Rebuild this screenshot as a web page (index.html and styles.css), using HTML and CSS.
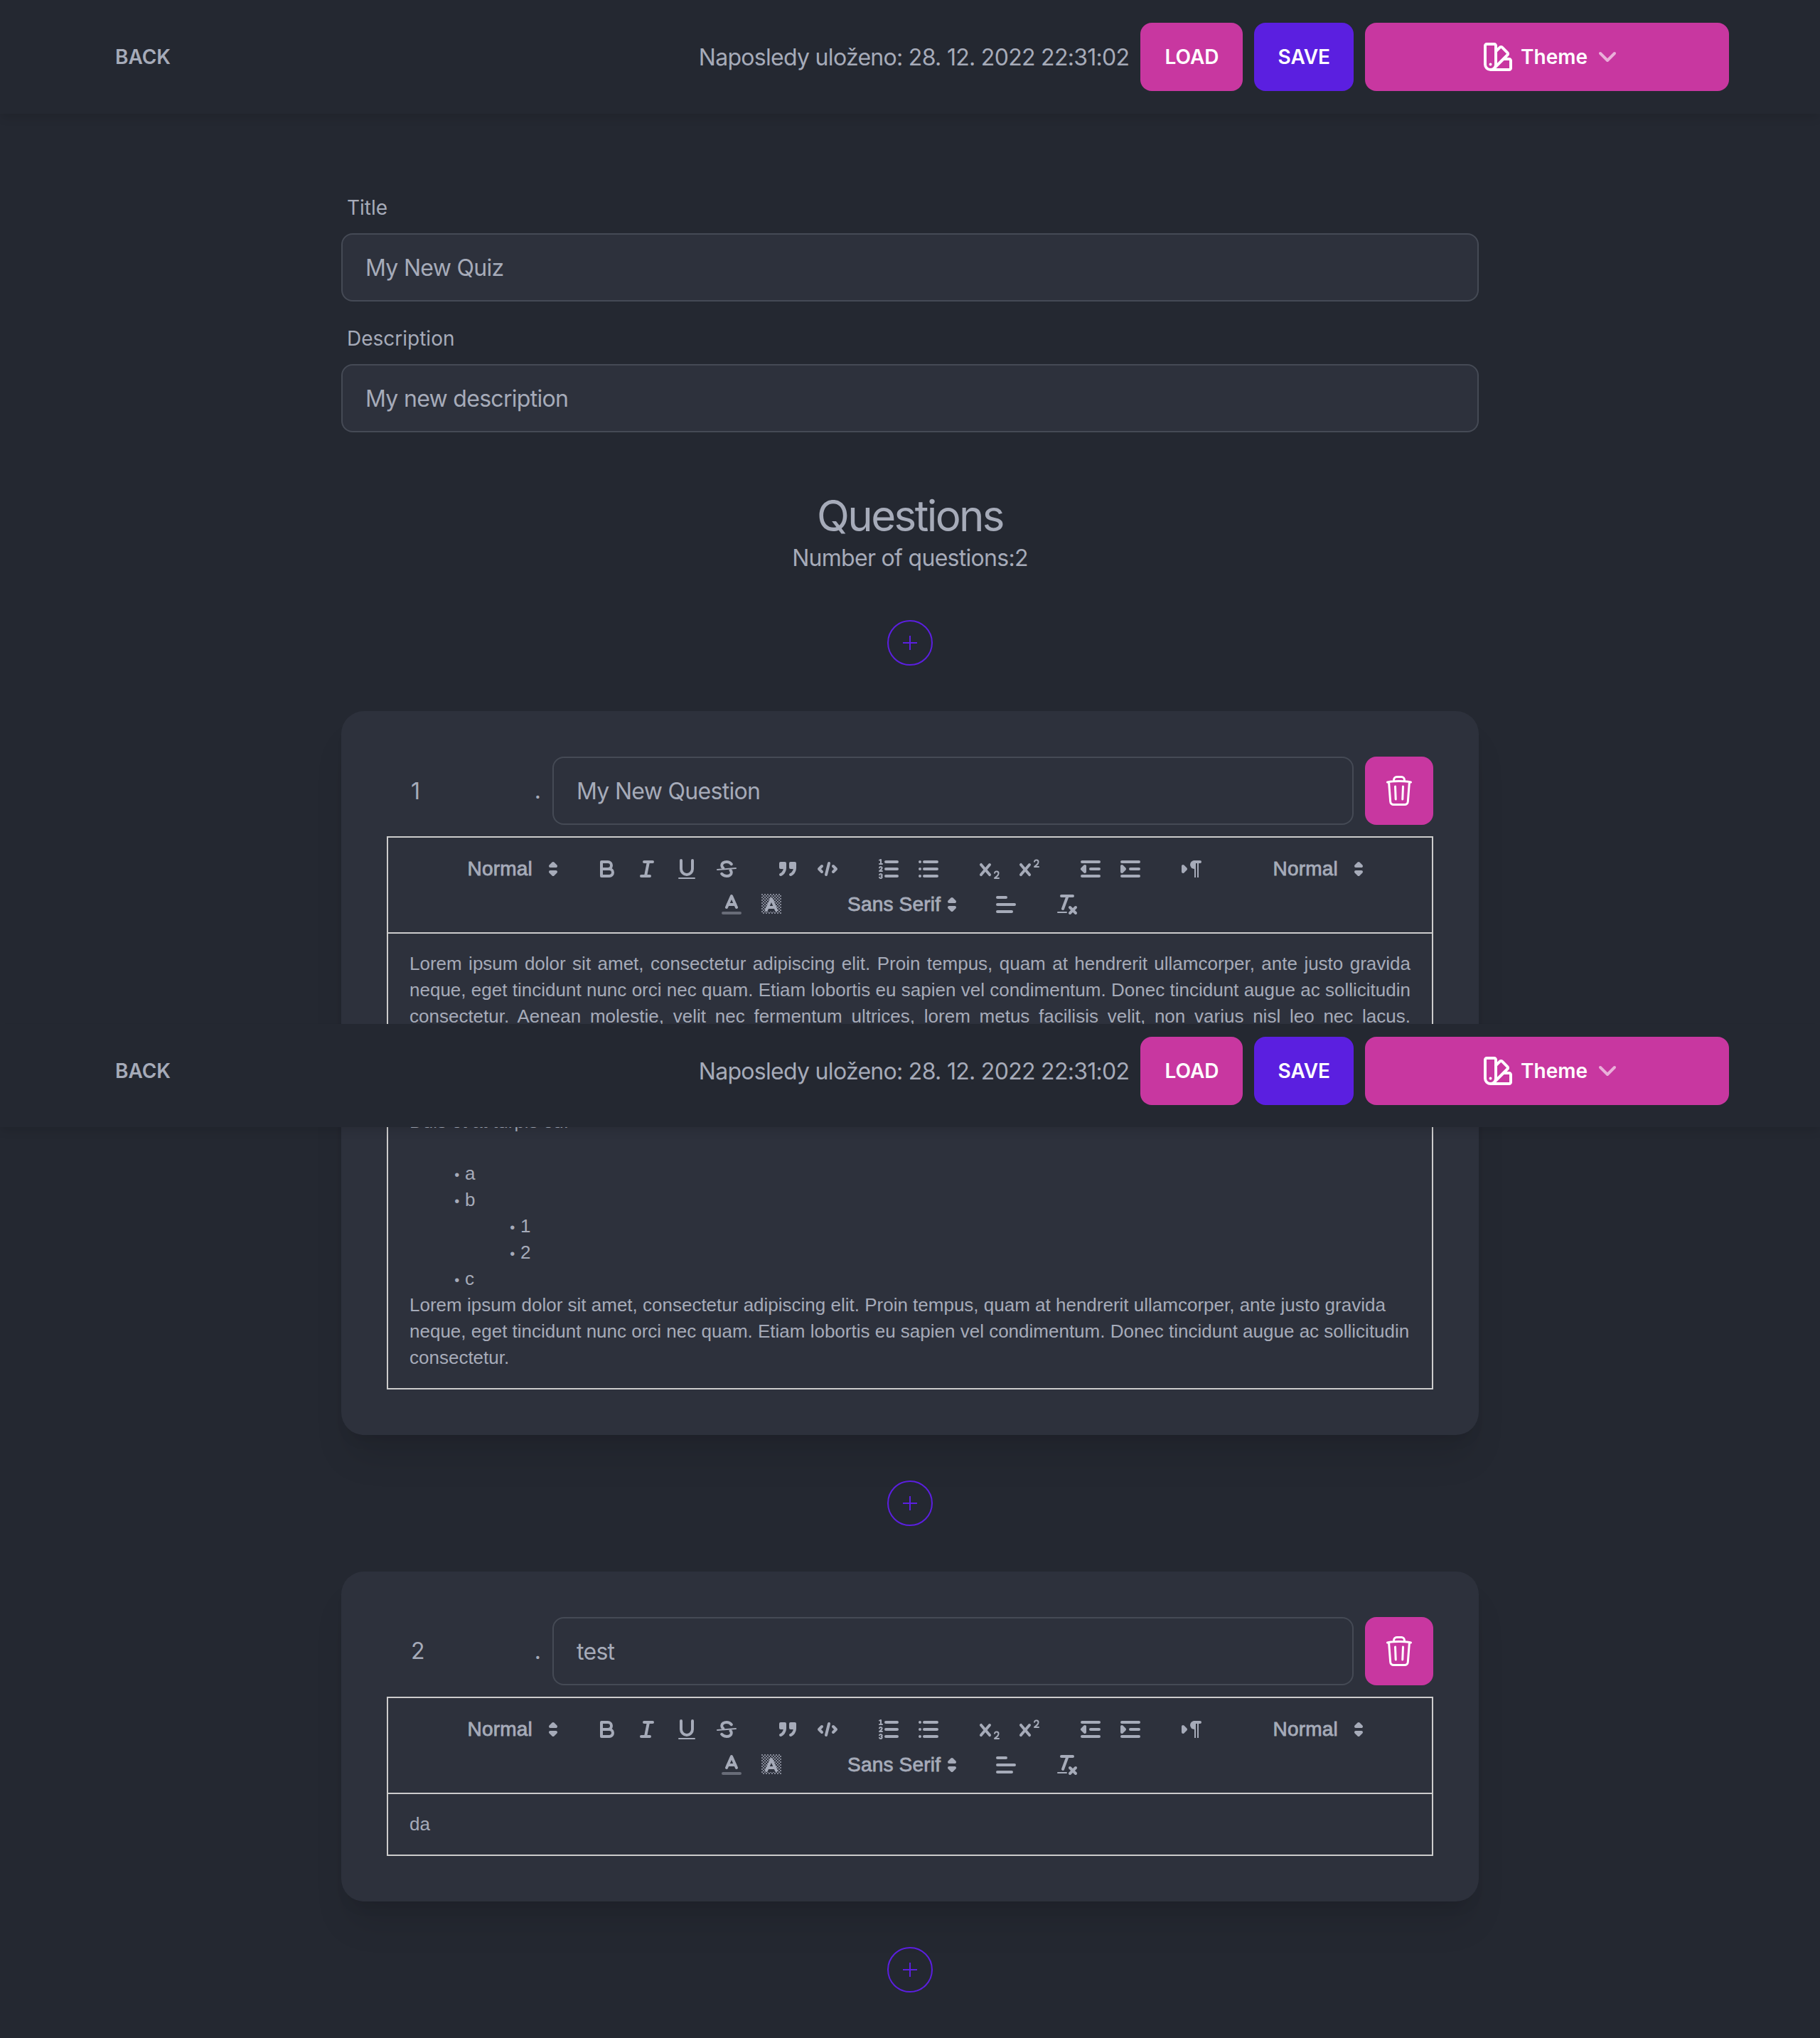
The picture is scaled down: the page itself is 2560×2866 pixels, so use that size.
FILE: index.html
```html
<!DOCTYPE html>
<html lang="en">
<head>
<meta charset="utf-8">
<title>Quiz editor</title>
<link rel="stylesheet" href="styles.css">
</head>
<body>
<svg class="sprite" width="0" height="0" aria-hidden="true">
  <defs>
    <pattern id="stipple" width="2" height="2" patternUnits="userSpaceOnUse" patternTransform="translate(2 1.5)">
      <rect width="1" height="1" class="f"/><rect x="1" y="1" width="1" height="1" class="f"/>
    </pattern>
    <symbol id="i-arrows" viewBox="0 0 18 18"><polygon class="s" points="7 11 9 13 11 11 7 11"/><polygon class="s" points="7 7 9 5 11 7 7 7"/></symbol>
    <symbol id="i-bold" viewBox="0 0 18 18"><path class="s" d="M5,4H9.5A2.5,2.5,0,0,1,12,6.5v0A2.5,2.5,0,0,1,9.5,9H5A0,0,0,0,1,5,9V4A0,0,0,0,1,5,4Z"/><path class="s" d="M5,9h5.5A2.5,2.5,0,0,1,13,11.5v0A2.5,2.5,0,0,1,10.5,14H5a0,0,0,0,1,0,0V9A0,0,0,0,1,5,9Z"/></symbol>
    <symbol id="i-italic" viewBox="0 0 18 18"><line class="s" x1="7" x2="13" y1="4" y2="4"/><line class="s" x1="5" x2="11" y1="14" y2="14"/><line class="s" x1="8" x2="10" y1="14" y2="4"/></symbol>
    <symbol id="i-underline" viewBox="0 0 18 18"><path class="s" d="M5,3V9a4.012,4.012,0,0,0,4,4H9a4.012,4.012,0,0,0,4-4V3"/><rect class="f" height="1" rx="0.5" ry="0.5" width="12" x="3" y="15"/></symbol>
    <symbol id="i-strike" viewBox="0 0 18 18"><line class="s thin" x1="15.5" x2="2.5" y1="8.5" y2="9.5"/><path class="s" d="M12.4,5.6C11.6,4.6,10.4,4,9,4,7,4,5.6,5.1,5.6,6.5c0,.8.4,1.4,1,1.8"/><path class="s" d="M5.6,12.4C6.4,13.4,7.6,14,9,14c2,0,3.4-1.1,3.4-2.5,0-.6-.2-1.1-.6-1.5"/></symbol>
    <symbol id="i-quote" viewBox="0 0 18 18"><rect class="f s" height="3" width="3" x="4" y="5"/><rect class="f s" height="3" width="3" x="11" y="5"/><path class="f s" d="M7,8c0,4.031-3,5-3,5"/><path class="f s" d="M14,8c0,4.031-3,5-3,5"/></symbol>
    <symbol id="i-code" viewBox="0 0 18 18"><polyline class="s" points="5 7 3 9 5 11"/><polyline class="s" points="13 7 15 9 13 11"/><line class="s" x1="10" x2="8" y1="5" y2="13"/></symbol>
    <symbol id="i-ol" viewBox="0 0 18 18"><line class="s" x1="7" x2="15" y1="4" y2="4"/><line class="s" x1="7" x2="15" y1="9" y2="9"/><line class="s" x1="7" x2="15" y1="14" y2="14"/><line class="s thin" x1="2.5" x2="4.5" y1="5.5" y2="5.5"/><path class="f" d="M3.5,6A0.5,0.5,0,0,1,3,5.5V3.085l-0.276.138A0.5,0.5,0,0,1,2.053,3c-0.124-.247-0.023-0.324.224-0.447l1-.5A0.5,0.5,0,0,1,4,2.5v3A0.5,0.5,0,0,1,3.5,6Z"/><path class="s thin" d="M4.5,10.5h-2c0-.234,1.85-1.076,1.85-2.234A0.959,0.959,0,0,0,2.5,8.156"/><path class="s thin" d="M2.5,14.846a0.959,0.959,0,0,0,1.85-.109A0.7,0.7,0,0,0,3.75,14a0.688,0.688,0,0,0,.6-0.736,0.959,0.959,0,0,0-1.85-.109"/></symbol>
    <symbol id="i-ul" viewBox="0 0 18 18"><line class="s" x1="6" x2="15" y1="4" y2="4"/><line class="s" x1="6" x2="15" y1="9" y2="9"/><line class="s" x1="6" x2="15" y1="14" y2="14"/><line class="s" x1="3" x2="3" y1="4" y2="4"/><line class="s" x1="3" x2="3" y1="9" y2="9"/><line class="s" x1="3" x2="3" y1="14" y2="14"/></symbol>
    <symbol id="i-sub" viewBox="0 0 18 18"><path class="f" d="M15.5,15H13.861a3.858,3.858,0,0,0,1.914-2.975,1.8,1.8,0,0,0-1.6-1.751A1.921,1.921,0,0,0,12.021,11.7a0.50013,0.50013,0,1,0,.957.291h0a0.914,0.914,0,0,1,1.053-.725,0.81,0.81,0,0,1,.744.762c0,1.076-1.16971,1.86982-1.93971,2.43082A1.45639,1.45639,0,0,0,12,15.5a0.5,0.5,0,0,0,.5.5h3A0.5,0.5,0,0,0,15.5,15Z"/><path class="f" d="M9.65,5.241a1,1,0,0,0-1.409.108L6,7.964,3.759,5.349A1,1,0,0,0,2.192,6.59178Q2.21541,6.6213,2.241,6.649L4.684,9.5,2.241,12.35A1,1,0,0,0,3.71,13.70722q0.02557-.02768.049-0.05722L6,11.036,8.241,13.65a1,1,0,1,0,1.567-1.24277Q9.78459,12.3777,9.759,12.35L7.316,9.5,9.759,6.651A1,1,0,0,0,9.65,5.241Z"/></symbol>
    <symbol id="i-sup" viewBox="0 0 18 18"><path class="f" d="M15.5,7H13.861a4.015,4.015,0,0,0,1.914-2.975,1.8,1.8,0,0,0-1.6-1.751A1.922,1.922,0,0,0,12.021,3.7a0.5,0.5,0,1,0,.957.291,0.917,0.917,0,0,1,1.053-.725,0.81,0.81,0,0,1,.744.762c0,1.077-1.164,1.925-1.934,2.486A1.423,1.423,0,0,0,12,7.5a0.5,0.5,0,0,0,.5.5h3A0.5,0.5,0,0,0,15.5,7Z"/><path class="f" d="M9.65,5.241a1,1,0,0,0-1.409.108L6,7.964,3.759,5.349A1,1,0,0,0,2.192,6.59178Q2.21541,6.6213,2.241,6.649L4.684,9.5,2.241,12.35A1,1,0,0,0,3.71,13.70722q0.02557-.02768.049-0.05722L6,11.036,8.241,13.65a1,1,0,1,0,1.567-1.24277Q9.78459,12.3777,9.759,12.35L7.316,9.5,9.759,6.651A1,1,0,0,0,9.65,5.241Z"/></symbol>
    <symbol id="i-outdent" viewBox="0 0 18 18"><line class="s" x1="3" x2="15" y1="14" y2="14"/><line class="s" x1="3" x2="15" y1="4" y2="4"/><line class="s" x1="9" x2="15" y1="9" y2="9"/><polyline class="f s" points="5 7 5 11 3 9 5 7"/></symbol>
    <symbol id="i-indent" viewBox="0 0 18 18"><line class="s" x1="3" x2="15" y1="14" y2="14"/><line class="s" x1="3" x2="15" y1="4" y2="4"/><line class="s" x1="9" x2="15" y1="9" y2="9"/><polyline class="f s" points="3 7 3 11 5 9 3 7"/></symbol>
    <symbol id="i-rtl" viewBox="0 0 18 18"><polygon class="s f" points="3 11 5 9 3 7 3 11"/><line class="s f" x1="15" x2="11" y1="4" y2="4"/><path class="f" d="M11,3a3,3,0,0,0,0,6h1V3H11Z"/><rect class="f" height="11" width="1" x="11" y="4"/><rect class="f" height="11" width="1" x="13" y="4"/></symbol>
    <symbol id="i-color" viewBox="0 0 18 18"><line class="s dim" x1="3" x2="15" y1="15" y2="15"/><polyline class="s" points="5.5 11 9 3 12.5 11"/><line class="s" x1="11.63" x2="6.38" y1="9" y2="9"/></symbol>
    <symbol id="i-bg" viewBox="0 0 18 18"><rect class="stipple" x="2" y="1.5" width="14" height="14" fill="url(#stipple)"/><polygon class="bgknock" points="9 3.5 13.6 14 4.4 14"/><polyline class="s" points="5.5 13 9 5 12.5 13"/><line class="s" x1="11.63" x2="6.38" y1="11" y2="11"/></symbol>
    <symbol id="i-align" viewBox="0 0 18 18"><line class="s" x1="3" x2="15" y1="9" y2="9"/><line class="s" x1="3" x2="13" y1="14" y2="14"/><line class="s" x1="3" x2="9" y1="4" y2="4"/></symbol>
    <symbol id="i-clean" viewBox="0 0 18 18"><line class="s" x1="5" x2="13" y1="3" y2="3"/><line class="s" x1="6" x2="9.35" y1="12" y2="3"/><line class="s" x1="11" x2="15" y1="11" y2="15"/><line class="s" x1="15" x2="11" y1="11" y2="15"/><rect class="f" height="1" rx="0.5" ry="0.5" width="7" x="2" y="14"/></symbol>
    <symbol id="i-swatch" viewBox="0 0 24 24"><path d="M4.098 19.902a3.75 3.75 0 005.304 0l6.401-6.402M6.75 21A3.75 3.75 0 013 17.25V4.125C3 3.504 3.504 3 4.125 3h5.25c.621 0 1.125.504 1.125 1.125v4.072M6.75 21a3.75 3.75 0 003.75-3.75V8.197M6.75 21h13.125c.621 0 1.125-.504 1.125-1.125v-5.25c0-.621-.504-1.125-1.125-1.125h-4.072M10.5 8.197l2.88-2.88c.438-.439 1.15-.439 1.59 0l3.712 3.713c.44.44.44 1.152 0 1.59l-2.879 2.88M6.75 17.25h.008v.008H6.75v-.008z"/></symbol>
    <symbol id="i-chevron" viewBox="0 0 24 24"><path d="M19.5 8.25l-7.5 7.5-7.5-7.5"/></symbol>
    <symbol id="i-trash" viewBox="0 0 24 24"><path d="M14.74 9l-.346 9m-4.788 0L9.26 9m9.968-3.21c.342.052.682.107 1.022.166m-1.022-.165L18.16 19.673a2.25 2.25 0 01-2.244 2.077H8.084a2.25 2.25 0 01-2.244-2.077L4.772 5.79m14.456 0a48.108 48.108 0 00-3.478-.397m-12 .562c.34-.059.68-.114 1.022-.165m0 0a48.11 48.11 0 013.478-.397m7.5 0v-.916c0-1.18-.91-2.164-2.09-2.201a51.964 51.964 0 00-3.32 0c-1.18.037-2.09 1.022-2.09 2.201v.916m7.5 0a48.667 48.667 0 00-7.5 0"/></symbol>
    <symbol id="i-plus" viewBox="0 0 24 24"><path d="M12 4.5v15m7.5-7.5h-15"/></symbol>
  </defs>
</svg>

<nav class="nav">
  <a class="nav-back">Back</a>
  <div class="nav-actions">
    <span class="nav-saved">Naposledy uloženo: 28. 12. 2022 22:31:02</span>
    <button class="btn btn-pink">Load</button>
    <button class="btn btn-violet">Save</button>
    <button class="btn btn-pink btn-theme"><svg class="ic-swatch"><use href="#i-swatch"/></svg><span class="theme-label">Theme</span><svg class="ic-chevron"><use href="#i-chevron"/></svg></button>
  </div>
</nav>

<nav class="nav nav-sticky">
  <a class="nav-back">Back</a>
  <div class="nav-actions">
    <span class="nav-saved">Naposledy uloženo: 28. 12. 2022 22:31:02</span>
    <button class="btn btn-pink">Load</button>
    <button class="btn btn-violet">Save</button>
    <button class="btn btn-pink btn-theme"><svg class="ic-swatch"><use href="#i-swatch"/></svg><span class="theme-label">Theme</span><svg class="ic-chevron"><use href="#i-chevron"/></svg></button>
  </div>
</nav>

<main class="main">
  <label class="field-label">Title</label>
  <div class="input">My New Quiz</div>
  <label class="field-label field-label-next">Description</label>
  <div class="input">My new description</div>

  <h1 class="q-title">Questions</h1>
  <p class="q-count">Number of questions:2</p>

  <button class="add"><svg class="ic-plus"><use href="#i-plus"/></svg></button>

  <section class="card">
    <div class="q-row">
      <span class="q-num">1</span><span class="q-dot">.</span>
      <div class="input input-grow">My New Question</div>
      <button class="btn btn-pink btn-del"><svg class="ic-trash"><use href="#i-trash"/></svg></button>
    </div>
    <div class="editor">
      <div class="toolbar">
        <div class="tb-row tb-row-1">
          <span class="picker picker-normal">Normal<svg class="ql"><use href="#i-arrows"/></svg></span>
          <span class="group"><i class="tool"><svg class="ql"><use href="#i-bold"/></svg></i><i class="tool"><svg class="ql"><use href="#i-italic"/></svg></i><i class="tool"><svg class="ql"><use href="#i-underline"/></svg></i><i class="tool"><svg class="ql"><use href="#i-strike"/></svg></i></span>
          <span class="group"><i class="tool"><svg class="ql"><use href="#i-quote"/></svg></i><i class="tool"><svg class="ql"><use href="#i-code"/></svg></i></span>
          <span class="group"><i class="tool"><svg class="ql"><use href="#i-ol"/></svg></i><i class="tool"><svg class="ql"><use href="#i-ul"/></svg></i></span>
          <span class="group"><i class="tool"><svg class="ql"><use href="#i-sub"/></svg></i><i class="tool"><svg class="ql"><use href="#i-sup"/></svg></i></span>
          <span class="group"><i class="tool"><svg class="ql"><use href="#i-outdent"/></svg></i><i class="tool"><svg class="ql"><use href="#i-indent"/></svg></i></span>
          <span class="group group-wide"><i class="tool"><svg class="ql"><use href="#i-rtl"/></svg></i></span>
          <span class="picker picker-normal">Normal<svg class="ql"><use href="#i-arrows"/></svg></span>
        </div>
        <div class="tb-row">
          <span class="group group-wide-2"><i class="tool"><svg class="ql"><use href="#i-color"/></svg></i><i class="tool"><svg class="ql"><use href="#i-bg"/></svg></i></span>
          <span class="picker picker-font">Sans Serif<svg class="ql"><use href="#i-arrows"/></svg></span>
          <span class="group"><i class="tool"><svg class="ql"><use href="#i-align"/></svg></i></span>
          <span class="group"><i class="tool"><svg class="ql"><use href="#i-clean"/></svg></i></span>
        </div>
      </div>
      <div class="content">
        <p class="justified">Lorem ipsum dolor sit amet, consectetur adipiscing elit. Proin tempus, quam at hendrerit ullamcorper, ante justo gravida neque, eget tincidunt nunc orci nec quam. Etiam lobortis eu sapien vel condimentum. Donec tincidunt augue ac sollicitudin consectetur. Aenean molestie, velit nec fermentum ultrices, lorem metus facilisis velit, non varius nisl leo nec lacus. Suspendisse vitae sapien ut nulla ullamcorper tempor, vivamus sit amet mauris in ligula dapibus tempor. Nulla nec mattis porta, arcu lectus dictum lorem, nec feugiat metus ipsum vitae dolor. Maecenas eget nisi at turpis varius aliquet non vel erat. Praesent sodales, nibh sed gravida pulvinar, enim massa tincidunt nisl, id facilisis eros neque a arcu.<br>Duis et at turpis eu.</p>
        <p><br></p>
        <ul class="list">
          <li>a</li>
          <li>b</li>
          <li class="indent">1</li>
          <li class="indent">2</li>
          <li>c</li>
        </ul>
        <p>Lorem ipsum dolor sit amet, consectetur adipiscing elit. Proin tempus, quam at hendrerit ullamcorper, ante justo gravida neque, eget tincidunt nunc orci nec quam. Etiam lobortis eu sapien vel condimentum. Donec tincidunt augue ac sollicitudin consectetur.</p>
      </div>
    </div>
  </section>

  <button class="add"><svg class="ic-plus"><use href="#i-plus"/></svg></button>

  <section class="card">
    <div class="q-row">
      <span class="q-num">2</span><span class="q-dot">.</span>
      <div class="input input-grow">test</div>
      <button class="btn btn-pink btn-del"><svg class="ic-trash"><use href="#i-trash"/></svg></button>
    </div>
    <div class="editor">
      <div class="toolbar">
        <div class="tb-row tb-row-1">
          <span class="picker picker-normal">Normal<svg class="ql"><use href="#i-arrows"/></svg></span>
          <span class="group"><i class="tool"><svg class="ql"><use href="#i-bold"/></svg></i><i class="tool"><svg class="ql"><use href="#i-italic"/></svg></i><i class="tool"><svg class="ql"><use href="#i-underline"/></svg></i><i class="tool"><svg class="ql"><use href="#i-strike"/></svg></i></span>
          <span class="group"><i class="tool"><svg class="ql"><use href="#i-quote"/></svg></i><i class="tool"><svg class="ql"><use href="#i-code"/></svg></i></span>
          <span class="group"><i class="tool"><svg class="ql"><use href="#i-ol"/></svg></i><i class="tool"><svg class="ql"><use href="#i-ul"/></svg></i></span>
          <span class="group"><i class="tool"><svg class="ql"><use href="#i-sub"/></svg></i><i class="tool"><svg class="ql"><use href="#i-sup"/></svg></i></span>
          <span class="group"><i class="tool"><svg class="ql"><use href="#i-outdent"/></svg></i><i class="tool"><svg class="ql"><use href="#i-indent"/></svg></i></span>
          <span class="group group-wide"><i class="tool"><svg class="ql"><use href="#i-rtl"/></svg></i></span>
          <span class="picker picker-normal">Normal<svg class="ql"><use href="#i-arrows"/></svg></span>
        </div>
        <div class="tb-row">
          <span class="group group-wide-2"><i class="tool"><svg class="ql"><use href="#i-color"/></svg></i><i class="tool"><svg class="ql"><use href="#i-bg"/></svg></i></span>
          <span class="picker picker-font">Sans Serif<svg class="ql"><use href="#i-arrows"/></svg></span>
          <span class="group"><i class="tool"><svg class="ql"><use href="#i-align"/></svg></i></span>
          <span class="group"><i class="tool"><svg class="ql"><use href="#i-clean"/></svg></i></span>
        </div>
      </div>
      <div class="content">
        <p>da</p>
      </div>
    </div>
  </section>

  <button class="add add-last"><svg class="ic-plus"><use href="#i-plus"/></svg></button>
</main>
</body>
</html>
```
FILE: styles.css
```css
* { box-sizing: border-box; }
html, body { margin: 0; padding: 0; }
body {
  position: relative;
  background: #242831;
  color: #a6abb9;
  font-family: Inter, "Liberation Sans", sans-serif;
  font-size: 32px;
  line-height: 48px;
}
.sprite { position: absolute; }
.s { fill: none; stroke: #a6abb9; stroke-width: 2; stroke-linecap: round; stroke-linejoin: round; }
.s.f { fill: #a6abb9; }
.f { fill: #a6abb9; }
.thin { stroke-width: 1; }
.dim { stroke: #686c78; }
.stipple { opacity: .7; }
.bgknock { fill: #2d313c; }

.nav {
  position: relative;
  z-index: 5;
  display: flex;
  justify-content: space-between;
  align-items: center;
  height: 160px;
  padding: 32px 128px;
  background: #242831;
  box-shadow: 0 8px 12px -2px rgba(0,0,0,.1);
}
.nav-sticky {
  position: absolute;
  top: 1440px;
  left: 0;
  right: 0;
  height: 145px;
  padding: 18px 128px 31px;
}
.nav-back {
  padding: 0 34px;
  font-size: 28px;
  font-weight: 600;
  text-transform: uppercase;
}
.nav-actions { display: flex; align-items: center; gap: 16px; }
.nav-saved { padding-top: 2px; font-size: 32px; letter-spacing: -0.7px; }

.btn {
  display: inline-flex;
  align-items: center;
  justify-content: center;
  height: 96px;
  padding: 0 34px;
  border: 0;
  border-radius: 16px;
  color: #fff;
  font-family: inherit;
  font-size: 28px;
  font-weight: 600;
  text-transform: uppercase;
}
.btn-pink { background: #c837a0; }
.btn-violet { background: #5b1fe0; padding: 0 33px; }
.btn-theme { width: 512px; padding-left: 42px; text-transform: none; }
.theme-label { margin: 0 12px 0 8px; }
.ic-swatch { width: 48px; height: 48px; fill: none; stroke: #fff; stroke-width: 2; stroke-linecap: round; stroke-linejoin: round; }
.ic-chevron { width: 32px; height: 32px; fill: none; stroke: rgba(255,255,255,.6); stroke-width: 3; stroke-linecap: round; stroke-linejoin: round; }

.main {
  display: flex;
  flex-direction: column;
  width: 1600px;
  margin: 0 auto;
  padding-top: 112px;
  padding-bottom: 64px;
}
.field-label {
  display: block;
  padding: 0 8px;
  margin-bottom: 16px;
  font-size: 28px;
  line-height: 40px;
}
.field-label-next { margin-top: 32px; }
.input {
  height: 96px;
  padding: 0 32px;
  border: 2px solid rgba(166,173,187,.2);
  border-radius: 16px;
  background: #2d313c;
  font-size: 32px;
  letter-spacing: -0.7px;
  line-height: 94px;
}
.q-title {
  margin: 81px 0 0;
  text-align: center;
  font-size: 60px;
  line-height: 72px;
  font-weight: 400;
  letter-spacing: -2.6px;
}
.q-count { margin: 0 0 -1px; text-align: center; font-size: 32px; line-height: 48px; letter-spacing: -0.7px; }

.add {
  display: flex;
  align-items: center;
  justify-content: center;
  align-self: center;
  width: 64px;
  height: 64px;
  margin: 64px 0;
  padding: 0;
  border: 2px solid #5b1fe0;
  border-radius: 50%;
  background: transparent;
}
.add-last { margin-bottom: 0; }
.ic-plus { width: 32px; height: 32px; fill: none; stroke: #5b1fe0; stroke-width: 1.5; }

.card {
  padding: 64px;
  border-radius: 32px;
  background: #2d313c;
  box-shadow: 0 40px 50px -10px rgba(0,0,0,.1), 0 16px 20px -12px rgba(0,0,0,.1);
}
.q-row { display: flex; align-items: center; gap: 16px; margin-bottom: 16px; }
.q-num { width: 200px; padding-left: 34px; padding-top: 1px; letter-spacing: -0.7px; }
.q-dot { width: 17px; margin-left: -16px; text-align: right; }
.input-grow { flex: 1; }
.btn-del { flex: none; width: 96px; padding: 0; }
.ic-trash { width: 48px; height: 48px; fill: none; stroke: #fff; stroke-width: 1.5; stroke-linecap: round; stroke-linejoin: round; }

.editor { border: 2px solid #ccc; }
.toolbar {
  height: 135px;
  padding-top: 19px;
  border-bottom: 2px solid #ccc;
  font-family: "Liberation Sans", Arial, sans-serif;
  font-weight: 400;
  -webkit-text-stroke: 0.8px #a6abb9;
}
.tb-row { display: flex; justify-content: center; align-items: center; height: 50px; font-size: 28px; letter-spacing: .2px; }
.tb-row-1 { padding-left: 10px; }
.tb-row-1 .picker:last-child { margin-right: 0; }
.group { display: inline-flex; margin-right: 30px; }
.group-wide { margin-right: 71px; }
.group-wide-2 { margin-right: 63px; }
.tool { display: block; width: 56px; height: 48px; padding: 6px 10px; font-style: normal; }
.ql { display: block; width: 36px; height: 36px; }
.picker {
  position: relative;
  display: inline-flex;
  align-items: center;
  height: 48px;
  margin-right: 30px;
  padding-left: 16px;
}
.picker .ql { position: absolute; right: 0; top: 6px; }
.picker-normal { width: 154px; }
.picker-font { width: 181px; }

.content {
  padding: 24px 30px;
  font-family: "Liberation Sans", Arial, sans-serif;
  font-size: 26px;
  line-height: 36.92px;
}
.content p { margin: 0; }
.justified { text-align: justify; }
.list { margin: 0; padding: 0 0 0 39px; list-style: none; }
.list li { padding-left: 39px; }
.list li::before {
  content: "\2022";
  display: inline-block;
  width: 31.2px;
  margin-left: -39px;
  margin-right: 7.8px;
  font-size: 20px;
  line-height: 1;
  text-align: right;
}
.list li.indent { padding-left: 117px; }
```
